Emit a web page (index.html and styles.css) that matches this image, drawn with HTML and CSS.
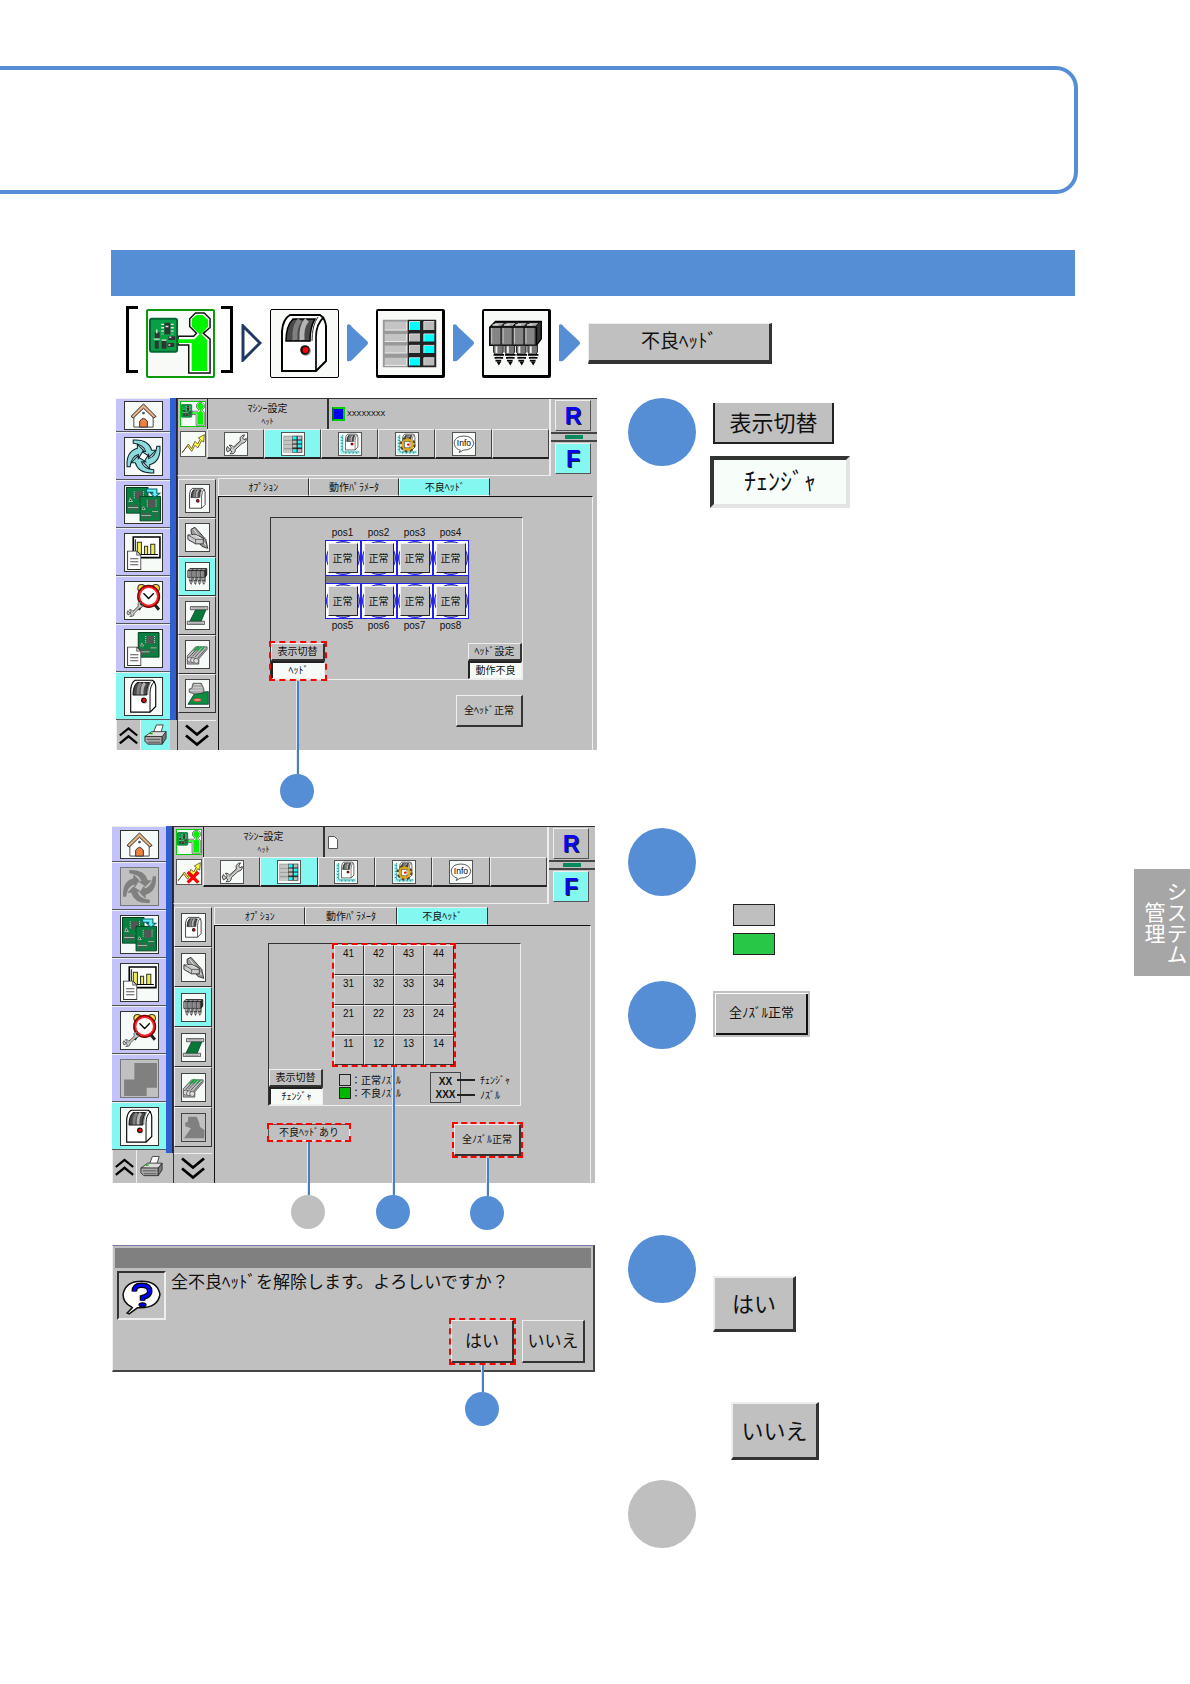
FILE: index.html
```html
<!DOCTYPE html>
<html lang="ja">
<head>
  <meta charset="UTF-8">
  <title>不良ヘッド</title>
  <link rel="stylesheet" href="styles.css">
</head>
<body>
  <!-- Icon set -->
  <svg class="sprite" aria-hidden="true">
    <symbol id="operator" viewBox="2 2 65 65">
      <path d="M32 27h16l3-3-7-7V9l6-6h9l6 6v9l-7 6 7 6v35H43V36H32z" fill="#fff" stroke="#111" stroke-width="1.500"/>
      <path d="M32 30h17l5-5-8-8V9l5-4h6l6 5v7l-7 8 6 6v32H46V34H32z" fill="#00f400"/>
      <rect x="3" y="9" width="28" height="34" rx="2" fill="#08a044" stroke="#063" stroke-width="2"/>
      <path d="M18 13h6v12h-6zM8 32h4v8H8zM15 32h5v8h-5zM8 23h5v6H8zM22 27h7v4h-7zM21 34h7v4h-7z" fill="#333"/>
      <path d="M16 14v11M26 14v11" stroke="#ddd" stroke-width="3" stroke-dasharray="1.500 2"/>
      <path d="M10 20v4M19 17h3M7 30h6M15 31h5M23 28h2M22 36h2" stroke="#ddd" stroke-width="1.500"/>
    </symbol>
    <symbol id="machine" viewBox="2 2 65 65">
      <path d="M12 62V22Q13 10 20 6H50Q55 9 56 17V52L46 62Z" fill="#fff" stroke="#000" stroke-width="2"/>
      <path d="M16 32Q16 17 23 10H45Q40 18 40 32Z" fill="#4a4a4a" stroke="#000" stroke-width="1.500"/>
      <path d="M25 31q-1-14 5-20" stroke="#808080" stroke-width="5" fill="none"/><path d="M32 31q-1-14 5-20" stroke="#b4b4b4" stroke-width="5" fill="none"/>
      <path d="M46 62V28Q46 15 54 8" stroke="#000" stroke-width="1.700" fill="none"/><path d="M42 32Q42 16 48 8" stroke="#333" fill="none"/>
      <circle cx="36" cy="42" r="5" fill="#aaa"/><circle cx="35" cy="41" r="4.800" fill="#111"/><circle cx="35.500" cy="41" r="3" fill="#f00"/>
    </symbol>
    <symbol id="table" viewBox="2 2 65 65">
      <path d="M6 10h26v50H6z" fill="#999"/><path d="M32 10h30v50H32z" fill="#222"/>
      <path d="M8 12h23v9H8zM8 25h23v8H8zM8 37h23v8H8zM8 50h23v8H8z" fill="#c4c4c4"/>
      <path d="M8 21h23V12M8 33h23v-8M8 45h23v-8M8 58h23v-8" stroke="#eee" fill="none"/>
      <path d="M49 12h11v9H49zM34 25h11v8H34zM34 37h11v8H34zM49 50h11v8H49z" fill="#bbb"/>
      <path d="M34 12h11v9H34zM49 25h11v8H49zM49 37h11v8H49zM34 50h11v8H34z" fill="#0ff"/>
      <path d="M34 21v-9h11M49 21v-9h11M34 33v-8h11M49 33v-8h11M34 45v-8h11M49 45v-8h11M34 58v-8h11M49 58v-8h11" stroke="#ddd" fill="none"/>
    </symbol>
    <symbol id="heads" viewBox="2 2 65 65">
      <path d="M7 18l6-6h48v18l-5 7H7z" fill="#333" stroke="#000" stroke-width="1.500"/>
      <g id="nozzle">
        <path d="M8 18h10v18H8z" fill="#858585"/><path d="M9 35V19" stroke="#ccc"/><path d="M8 17l5-4h10l-4 4z" fill="#aaa" stroke="#111"/><path d="M10 15.500h6" stroke="#eee"/>
        <path d="M11 37h10v7l-2 3h-6l-2-3z" fill="#777" stroke="#222"/><path d="M14 38v7" stroke="#eee" stroke-width="2"/>
        <path d="M11 47h11M12 50h9M13 53h6" stroke="#000" stroke-width="1.800"/><path d="M13 48.500h6M14 51.500h5" stroke="#ccc"/><path d="M14 54h5l-2.500 4z" fill="#000"/>
      </g>
      <use href="#nozzle" x="12"/><use href="#nozzle" x="24"/><use href="#nozzle" x="36"/>
      <path d="M7 18h49v19" fill="none" stroke="#000" stroke-width="1.200"/>
    </symbol>
    <symbol id="home" viewBox="0 0 36 28">
      <path d="M8 14v12h20V14L18 5z" fill="#fff" stroke="#444"/>
      <path d="M5 15L18 2l13 13-2.500 1.500L18 6.500 7.500 16.500z" fill="#e7b78c" stroke="#222"/>
      <path d="M14 26v-6q4-6 8 0v6z" fill="#f08040" stroke="#333"/><circle cx="18" cy="11.500" r="1.500" fill="#555"/>
    </symbol>
    <symbol id="cycle" viewBox="0 0 36 36">
      <g id="cyc"><path d="M8 2Q23 1 26 12h4l-6 6-8-5h4Q18 6 8 5z"/></g>
      <use href="#cyc" transform="rotate(90 18 18)"/><use href="#cyc" transform="rotate(180 18 18)"/><use href="#cyc" transform="rotate(270 18 18)"/>
    </symbol>
    <symbol id="board" viewBox="0 0 22 26">
      <path d="M.5.5h21v25H.5z" fill="#078040" stroke="#033d1c"/>
      <path d="M9 4h7v8H9zM3 17h3v6H3zM8 17h3v6H8zM14 15h4v2h-4zM14 19h4v2h-4z" fill="#555"/>
      <path d="M8 4v8M17 4v8" stroke="#ccc" stroke-dasharray="1 1"/><path d="M2 20h10M13 16h6M4 11l2 3H3z" stroke="#a5b8aa" fill="#111"/>
    </symbol>
    <symbol id="boards" viewBox="0 0 36 36">
      <use href="#board" x="1" y="1" width="22" height="26"/><use href="#board" x="14" y="9" width="21" height="26"/>
      <path d="M21 3h10v4h3l-5 4-4-4h2V6h-6z" fill="#6ee" stroke="#067"/>
    </symbol>
    <symbol id="report" viewBox="0 0 36 36">
      <path d="M8 3h26v20H8z" fill="#fff" stroke="#000" stroke-width="1.500"/>
      <path d="M12 8h4v12h-4zM19 12h3v8h-3zM25 10h4v10h-4z" fill="#ee4" stroke="#333"/><path d="M10 5v15h22" stroke="#000" fill="none"/>
      <use href="#page" x="2" y="16" width="14" height="19"/>
    </symbol>
    <symbol id="page" viewBox="0 0 14 19">
      <path d="M.5.5h9l4 4v14H.5z" fill="#fff" stroke="#333"/><path d="M9.500.500v4h4M3 8h8M3 11h8M3 14h8" stroke="#555" fill="none"/>
    </symbol>
    <symbol id="wrench" viewBox="0 0 36 36">
      <path d="M4 31q-4-5 0-9l2 3 3 2 1-3-3-4q5-1 7 3L25 13q-2-6 3-9l4-1-3 5 2 3 4-2q0 7-7 8L17 27q0 7-6 7l-3 0 3-3-2-3z" fill="#ccc" stroke="#222" stroke-width="1.300"/>
      <path d="M13 26L27 13" stroke="#777"/>
    </symbol>
    <symbol id="clock" viewBox="0 0 36 36">
      <circle cx="16" cy="6" r="3.500" fill="#fd3" stroke="#333"/><circle cx="30" cy="6" r="3.500" fill="#fd3" stroke="#333"/>
      <path d="M16 22l-3 5M29 22l4 5" stroke="#222" stroke-width="3"/>
      <circle cx="23" cy="14" r="10" fill="#fff" stroke="#700" stroke-width="2.500"/><circle cx="23" cy="14" r="9" fill="none" stroke="#f22" stroke-width="1.800"/>
      <path d="M18 11l5 5 5-5" stroke="#000" fill="none" stroke-width="1.300"/><use href="#wrench" x="1" y="17" width="17" height="18"/>
    </symbol>
    <symbol id="docboard" viewBox="0 0 36 36">
      <use href="#board" x="11" y="2" width="24" height="25"/><use href="#page" x="2" y="16" width="14" height="19"/>
    </symbol>
    <symbol id="printer" viewBox="0 0 26 26">
      <path d="M10 12l4-10h7l-3 10z" fill="#fff" stroke="#444"/><path d="M2 14l7-5h15l-4 6z" fill="#ddd" stroke="#444"/>
      <path d="M2 14h18v8H5l-3-3z" fill="#aaa" stroke="#333"/><path d="M20 14l4-5v7l-4 6z" fill="#777" stroke="#333"/>
      <path d="M4 17h14M5 20h13" stroke="#555"/><path d="M7 11h3" stroke="#0a0" stroke-width="1.500"/>
    </symbol>
    <symbol id="chevrons" viewBox="0 0 24 24">
      <path d="M1 2l11 9L23 2M1 12l11 9 11-9" stroke="#000" stroke-width="2.800" fill="none"/>
    </symbol>
    <symbol id="zigzag" viewBox="0 0 36 36">
      <path d="M2 31L11 18l5 7 5-11 4 4 4-7-3-2 9-5-1 11-3-2-6 11-4-4-5 9-6-8-8 9z" fill="#ff4" stroke="#542" stroke-width="1.200"/>
    </symbol>
    <symbol id="cross" viewBox="0 0 36 36"><path d="M16 18l16 16M32 18L16 34" stroke="#f00" stroke-width="5"/></symbol>
    <symbol id="axis" viewBox="0 0 36 36">
      <path d="M2 4h5v25h27v5H2z" fill="#a6f4f4"/><path d="M6 3v28h28M3 7h3M3 12h3M3 17h3M3 22h3M3 27h3M11 31v3M17 31v3M23 31v3M29 31v3" stroke="#066" fill="none" stroke-dasharray="3 1"/>
      <use href="#machine" x="6" y="-1" width="30" height="32"/>
    </symbol>
    <symbol id="gear" viewBox="0 0 36 36">
      <use href="#axis" width="36" height="36"/>
      <circle cx="19" cy="19" r="10" fill="none" stroke="#542" stroke-width="6" stroke-dasharray="4 3.850"/>
      <circle cx="19" cy="19" r="8" fill="#fff" stroke="#da1" stroke-width="4"/><path d="M14 14h9v10h-9z" fill="#fff" stroke="#333"/><circle cx="20" cy="19" r="2" fill="#f00"/>
    </symbol>
    <symbol id="info" viewBox="0 0 36 36">
      <path d="M9 27Q2 24 2 15 4 5 18 5t16 12Q32 28 17 28l-7 4 2-4z" fill="#fff" stroke="#333" stroke-width="1.300"/>
      <text x="18" y="22" text-anchor="middle" class="info-text">Info</text>
    </symbol>
    <symbol id="camera" viewBox="0 0 36 40">
      <path d="M8 7l6-3 17 19 3 14-9-3L8 13z" fill="#999" stroke="#222" stroke-width="1.300"/><path d="M12 7l19 25" stroke="#eee" stroke-width="1.500"/>
      <path d="M3 16h14l10 5v9H15L3 23z" fill="#ccc" stroke="#222" stroke-width="1.300"/><path d="M3 16l12 7v7M15 23h12" stroke="#333" fill="none"/><path d="M7 17h9l7 4" stroke="#fff" fill="none"/>
    </symbol>
    <symbol id="roll" viewBox="0 0 36 40">
      <path d="M16 9h16l-9 22H5z" fill="#087838" stroke="#022"/>
      <path d="M7 6h27v5H7zM2 29h27v5H2z" fill="#ccc" stroke="#222"/><path d="M10 8h21M5 32h21" stroke="#777"/>
    </symbol>
    <symbol id="feeder" viewBox="0 0 36 36">
      <path d="M2 20L15 6h18v4L20 25v8H2z" fill="#bbb" stroke="#222"/>
      <path d="M6 21L19 7M10 21L23 7M14 22L27 8M18 24L31 9" stroke="#222"/><path d="M12 12l8-7M17 12l7-6M23 12l6-6" stroke="#0a3" stroke-width="2"/>
      <circle cx="6" cy="26" r="4" fill="#ddd" stroke="#333"/><circle cx="11" cy="27" r="4" fill="#ddd" stroke="#333"/><circle cx="16" cy="28" r="4" fill="#ddd" stroke="#333"/>
    </symbol>
    <symbol id="part" viewBox="0 0 36 40">
      <path d="M14 19l21-2v20H3z" fill="#079040" stroke="#022"/>
      <path d="M11 4h13l4 9v6l-14 2-9-3v-5l4-1z" fill="#aaa" stroke="#222"/><path d="M11 11h14M6 15h19M13 6h9" stroke="#eee"/>
      <ellipse cx="18" cy="30" rx="6" ry="2.500" fill="#f87" stroke="#a32"/>
    </symbol>
    <symbol id="boards-off" viewBox="0 0 36 36"><path d="M13 3h22v24H25v8H3V19h10z" fill="#808080"/></symbol>
    <symbol id="part-off" viewBox="0 0 36 40"><path d="M10 3h13l4 10 1 6 7 5v13H3l11-16-9-3v-6l4-1z" fill="#808080"/></symbol>
    <symbol id="question" viewBox="0 0 40 40">
      <path d="M10 31Q2 27 2 19 4 6 20 6t18 13Q36 32 19 32H16l-8 6-2-1 5-5z" fill="#fff" stroke="#111" stroke-width="1.500"/>
      <path d="M13 16q0-6 7-6 8 0 8 6 0 4-7 6v3" fill="none" stroke="#000" stroke-width="5.500"/><path d="M13 16q0-6 7-6 8 0 8 6 0 4-7 6v3" fill="none" stroke="#00f" stroke-width="3"/>
      <ellipse cx="21" cy="29" rx="3.500" ry="2" fill="#00d" stroke="#000"/>
    </symbol>
  </svg>

  <header class="page-head"></header>
  <div class="title-bar"></div>

  <nav class="path" aria-label="操作手順">
    <span class="bracket"></span>
    <button class="tile tile-green" aria-label="オペレータ"><svg><use href="#operator"/></svg></button>
    <span class="bracket bracket-end"></span>
    <svg class="arrow" viewBox="0 0 21 38"><path d="M2 2v34l17-17z" fill="#fff" stroke="#1f3864" stroke-width="3"/></svg>
    <button class="tile tile-flat" aria-label="マシン"><svg><use href="#machine"/></svg></button>
    <svg class="arrow" viewBox="0 0 21 38"><path d="M0 1q3-2 5 2l15 14q2 2 0 4L5 36q-2 2-5 1z" fill="#558ed5"/></svg>
    <button class="tile" aria-label="設定"><svg><use href="#table"/></svg></button>
    <svg class="arrow" viewBox="0 0 21 38"><path d="M0 1q3-2 5 2l15 14q2 2 0 4L5 36q-2 2-5 1z" fill="#558ed5"/></svg>
    <button class="tile" aria-label="ヘッド"><svg><use href="#heads"/></svg></button>
    <svg class="arrow" viewBox="0 0 21 38"><path d="M0 1q3-2 5 2l15 14q2 2 0 4L5 36q-2 2-5 1z" fill="#558ed5"/></svg>
    <button class="btn path-btn">不良ﾍｯﾄﾞ</button>
  </nav>

  <main class="layout">
    <div class="shots">

      <!-- Head view -->
      <section class="screen screen-first">
        <div class="rail">
          <button class="rail-item rail-home" aria-label="ホーム"><svg><use href="#home"/></svg></button>
          <button class="rail-item" aria-label="運転"><svg class="cycle"><use href="#cycle"/></svg></button>
          <button class="rail-item" aria-label="基板切替"><svg><use href="#boards"/></svg></button>
          <button class="rail-item" aria-label="生産情報"><svg><use href="#report"/></svg></button>
          <button class="rail-item" aria-label="メンテナンス"><svg><use href="#clock"/></svg></button>
          <button class="rail-item" aria-label="データ"><svg><use href="#docboard"/></svg></button>
          <button class="rail-item on" aria-label="マシン"><svg><use href="#machine"/></svg></button>
          <div class="rail-foot">
            <button aria-label="上へ"><svg class="flip"><use href="#chevrons"/></svg></button>
            <button class="on" aria-label="印刷"><svg><use href="#printer"/></svg></button>
          </div>
        </div>
        <div class="edge"></div>
        <div class="work">
          <div class="top">
            <div class="top-main">
              <div class="title-row">
                <span class="cell-ico green"><svg><use href="#operator"/></svg></span>
                <div class="title">ﾏｼﾝｰ設定<small>ﾍｯﾄ</small></div>
                <div class="file"><i class="lot"></i>XXXXXXXX</div>
              </div>
              <div class="menu-row">
                <button class="cell-ico" aria-label="状態"><svg><use href="#zigzag"/></svg></button>
                <button class="menu" aria-label="調整"><svg><use href="#wrench"/></svg></button>
                <button class="menu on" aria-label="設定"><svg><use href="#table"/></svg></button>
                <button class="menu" aria-label="軸"><svg><use href="#axis"/></svg></button>
                <button class="menu" aria-label="動作"><svg><use href="#gear"/></svg></button>
                <button class="menu" aria-label="情報"><svg><use href="#info"/></svg></button>
                <span class="menu"></span>
              </div>
              <div class="strip"></div>
            </div>
            <div class="sides">
              <button class="side-btn">R</button>
              <div class="lane"><i></i></div>
              <button class="side-btn on">F</button>
            </div>
          </div>
          <div class="body">
            <div class="tools">
              <button class="tool" aria-label="本体"><svg><use href="#machine"/></svg></button>
              <button class="tool" aria-label="カメラ"><svg><use href="#camera"/></svg></button>
              <button class="tool on" aria-label="ヘッド"><svg><use href="#heads"/></svg></button>
              <button class="tool" aria-label="搬送"><svg><use href="#roll"/></svg></button>
              <button class="tool" aria-label="フィーダ"><svg><use href="#feeder"/></svg></button>
              <button class="tool" aria-label="部品"><svg><use href="#part"/></svg></button>
              <button class="tool-down" aria-label="下へ"><svg><use href="#chevrons"/></svg></button>
            </div>
            <div class="pane">
              <div class="tabs">
                <button>ｵﾌﾟｼｮﾝ</button>
                <button>動作ﾊﾟﾗﾒｰﾀ</button>
                <button class="on">不良ﾍｯﾄﾞ</button>
              </div>
              <div class="pane-body">
                <div class="panel">
                  <div class="heads">
                    <span>pos1</span><span>pos2</span><span>pos3</span><span>pos4</span>
                    <div class="head"><button>正常</button></div>
                    <div class="head"><button>正常</button></div>
                    <div class="head"><button>正常</button></div>
                    <div class="head"><button>正常</button></div>
                    <div class="beam"></div>
                    <div class="head"><button>正常</button></div>
                    <div class="head"><button>正常</button></div>
                    <div class="head"><button>正常</button></div>
                    <div class="head"><button>正常</button></div>
                    <span>pos5</span><span>pos6</span><span>pos7</span><span>pos8</span>
                  </div>
                  <div class="panel-foot">
                    <div class="pair mark">
                      <button class="btn">表示切替</button>
                      <output>ﾍｯﾄﾞ</output>
                      <span class="callout callout-view"></span>
                    </div>
                    <div class="pair">
                      <button class="btn">ﾍｯﾄﾞ設定</button>
                      <output>動作不良</output>
                    </div>
                  </div>
                </div>
                <div class="actions">
                  <button class="btn all-ok">全ﾍｯﾄﾞ正常</button>
                </div>
              </div>
            </div>
          </div>
        </div>
      </section>

      <!-- Changer view -->
      <section class="screen screen-second">
        <div class="rail">
          <button class="rail-item rail-home" aria-label="ホーム"><svg><use href="#home"/></svg></button>
          <button class="rail-item" aria-label="運転" disabled><svg class="cycle"><use href="#cycle"/></svg></button>
          <button class="rail-item" aria-label="基板切替"><svg><use href="#boards"/></svg></button>
          <button class="rail-item" aria-label="生産情報"><svg><use href="#report"/></svg></button>
          <button class="rail-item" aria-label="メンテナンス"><svg><use href="#clock"/></svg></button>
          <button class="rail-item" aria-label="データ" disabled><svg><use href="#boards-off"/></svg></button>
          <button class="rail-item on" aria-label="マシン"><svg><use href="#machine"/></svg></button>
          <div class="rail-foot">
            <button aria-label="上へ"><svg class="flip"><use href="#chevrons"/></svg></button>
            <button aria-label="印刷"><svg><use href="#printer"/></svg></button>
          </div>
        </div>
        <div class="edge"></div>
        <div class="work">
          <div class="top">
            <div class="top-main">
              <div class="title-row">
                <span class="cell-ico green"><svg><use href="#operator"/></svg></span>
                <div class="title">ﾏｼﾝｰ設定<small>ﾍｯﾄ</small></div>
                <div class="file"><svg class="doc" viewBox="0 0 10 13"><path d="M.5.5h6l3 3v9h-9z" fill="#fff" stroke="#555"/></svg></div>
              </div>
              <div class="menu-row">
                <button class="cell-ico" aria-label="状態"><svg viewBox="0 0 36 36"><use href="#zigzag"/><use href="#cross"/></svg></button>
                <button class="menu" aria-label="調整"><svg><use href="#wrench"/></svg></button>
                <button class="menu on" aria-label="設定"><svg><use href="#table"/></svg></button>
                <button class="menu" aria-label="軸"><svg><use href="#axis"/></svg></button>
                <button class="menu" aria-label="動作"><svg><use href="#gear"/></svg></button>
                <button class="menu" aria-label="情報"><svg><use href="#info"/></svg></button>
                <span class="menu"></span>
              </div>
              <div class="strip"></div>
            </div>
            <div class="sides">
              <button class="side-btn">R</button>
              <div class="lane"><i></i></div>
              <button class="side-btn on">F</button>
            </div>
          </div>
          <div class="body">
            <div class="tools">
              <button class="tool" aria-label="本体"><svg><use href="#machine"/></svg></button>
              <button class="tool" aria-label="カメラ"><svg><use href="#camera"/></svg></button>
              <button class="tool on" aria-label="ヘッド"><svg><use href="#heads"/></svg></button>
              <button class="tool" aria-label="搬送"><svg><use href="#roll"/></svg></button>
              <button class="tool" aria-label="フィーダ"><svg><use href="#feeder"/></svg></button>
              <button class="tool" aria-label="部品" disabled><svg><use href="#part-off"/></svg></button>
              <button class="tool-down" aria-label="下へ"><svg><use href="#chevrons"/></svg></button>
            </div>
            <div class="pane">
              <div class="tabs">
                <button>ｵﾌﾟｼｮﾝ</button>
                <button>動作ﾊﾟﾗﾒｰﾀ</button>
                <button class="on">不良ﾍｯﾄﾞ</button>
              </div>
              <div class="pane-body">
                <div class="panel">
                  <div class="nozzles mark">
                    <button>41</button><button>42</button><button>43</button><button>44</button>
                    <button>31</button><button>32</button><button>33</button><button>34</button>
                    <button>21</button><button>22</button><button>23</button><button>24</button>
                    <button>11</button><button>12</button><button>13</button><button>14</button>
                    <span class="callout callout-nozzle"></span>
                  </div>
                  <div class="panel-foot">
                    <div class="pair">
                      <button class="btn">表示切替</button>
                      <output>ﾁｪﾝｼﾞｬ</output>
                    </div>
                    <ul class="legend">
                      <li><i></i>：正常ﾉｽﾞﾙ</li>
                      <li><i class="bad"></i>：不良ﾉｽﾞﾙ</li>
                    </ul>
                    <div class="key">
                      <div class="key-box"><b>XX</b><b>XXX</b></div>
                      <div class="key-names"><span>ﾁｪﾝｼﾞｬ</span><span>ﾉｽﾞﾙ</span></div>
                    </div>
                  </div>
                </div>
                <div class="actions">
                  <div class="status mark">不良ﾍｯﾄﾞあり<span class="callout callout-status"></span></div>
                  <div class="mark">
                    <button class="btn all-ok">全ﾉｽﾞﾙ正常</button>
                    <span class="callout callout-reset"></span>
                  </div>
                </div>
              </div>
            </div>
          </div>
        </div>
      </section>

      <!-- Confirmation -->
      <section class="dialog">
        <div class="dialog-title"></div>
        <div class="dialog-body">
          <span class="dialog-ico"><svg><use href="#question"/></svg></span>
          <p>全不良ﾍｯﾄﾞを解除します。よろしいですか？</p>
        </div>
        <div class="dialog-buttons">
          <div class="mark">
            <button class="btn">はい</button>
            <span class="callout callout-yes"></span>
          </div>
          <button class="btn">いいえ</button>
        </div>
      </section>
    </div>

    <div class="steps">
      <div class="step step-view">
        <span class="dot"></span>
        <div class="step-body">
          <button class="btn view-btn">表示切替</button>
          <output class="view-value">ﾁｪﾝｼﾞｬ</output>
        </div>
      </div>
      <div class="step step-nozzle">
        <span class="dot"></span>
        <div class="step-body">
          <span class="swatch"></span>
          <span class="swatch swatch-bad"></span>
        </div>
      </div>
      <div class="step step-reset">
        <span class="dot"></span>
        <div class="step-body">
          <button class="btn reset-btn">全ﾉｽﾞﾙ正常</button>
        </div>
      </div>
      <div class="step step-answer">
        <span class="dot"></span>
        <div class="step-body">
          <button class="btn yes-btn">はい</button>
          <button class="btn no-btn">いいえ</button>
        </div>
      </div>
      <div class="step">
        <span class="dot dot-grey"></span>
      </div>
    </div>

    <aside class="chapter">システム<br>管理</aside>
  </main>
</body>
</html>
```
FILE: styles.css
```css
* {
  box-sizing: border-box;
}
body {
  margin: 0;
  background: #fff;
  color: #111;
  font-family: "Noto Sans CJK JP", "Liberation Sans", sans-serif;
  font-size: 10px;
  line-height: 14px;
}
button {
  margin: 0;
  padding: 0;
  border: 0;
  background: #c0c0c0;
  color: #111;
  font: inherit;
  cursor: pointer;
}
svg {
  display: block;
  width: 100%;
  height: 100%;
}
.sprite {
  display: none;
}
.info-text {
  font-family: "Liberation Sans", sans-serif;
  font-size: 14px;
}

/* Page top */
.page-head {
  height: 128px;
  margin: 66px 112px 56px 0;
  border: 4px solid #558ed5;
  border-left: 0;
  border-radius: 0 22px 22px 0;
}
.title-bar {
  height: 46px;
  margin: 0 115px 0 111px;
  background: #558ed5;
}
.path {
  display: flex;
  align-items: center;
  gap: 8px;
  height: 102px;
  padding: 0 0 8px 126px;
}
.bracket {
  width: 12px;
  height: 67px;
  margin-bottom: 8px;
  border: 3px solid #000;
  border-right: 0;
}
.bracket-end {
  margin-left: -2px;
  border-right: 3px solid #000;
  border-left: 0;
}
.tile {
  width: 69px;
  height: 69px;
  padding: 1px;
  border: 2px solid #000;
  border-right-width: 3px;
  border-bottom-width: 3px;
  border-radius: 2px;
  background: #f7faf7;
}
.tile-flat {
  border-width: 1px;
}
.tile-green {
  border: 2px solid #0a9a0a;
}
.arrow {
  width: 21px;
  height: 38px;
}
.btn {
  border: 1px solid #eee;
  border-right: 2px solid #333;
  border-bottom: 2px solid #333;
}
.path-btn {
  width: 184px;
  height: 41px;
  padding-bottom: 3px;
  border-right-width: 3px;
  border-bottom-width: 4px;
  font-size: 19px;
}

.layout {
  display: grid;
  grid-template-columns: 483fr 473fr 56px;
  gap: 33px;
  margin-left: 112px;
}

/* Machine screens */
.screen {
  display: flex;
  background: #c0c0c0;
}
.screen-first {
  margin: 0 -2px 76px 4px;
}
.screen-second {
  margin-bottom: 62px;
}
.screen .on {
  background: #84f7f0;
}
.rail {
  display: flex;
  flex-direction: column;
  width: 54px;
}
.rail-item {
  display: flex;
  align-items: center;
  justify-content: center;
  height: 48px;
  border-top: 1px solid #eee;
  border-bottom: 1px solid #555;
  background: #c3c3fa;
}
.rail-item svg {
  width: 39px;
  height: 39px;
  border: 1px solid #333;
  background: #f7fbf7;
}
.rail-home {
  height: 34px;
}
.rail-home svg {
  height: 29px;
}
.cycle {
  fill: #8ddcdc;
  stroke: #123;
}
.rail-item:disabled svg {
  border-color: #777;
  background: #c0c0c0;
  fill: #808080;
  stroke: none;
}
.rail-foot {
  display: flex;
  height: 30px;
}
.rail-foot button {
  flex: 1;
  padding: 3px 2px 2px;
  border-left: 1px solid #eee;
}
.rail-foot button:first-child {
  flex: 0 0 24px;
}
.rail-foot .flip {
  transform: rotate(180deg);
}
.screen-second .rail-home {
  height: 36px;
}
.screen-second .rail-foot {
  height: 33px;
}
.edge {
  width: 7px;
  margin-bottom: 30px;
  border-right: 1px solid #223;
  background: #3060d0;
}
.work {
  flex: 1;
  min-width: 0;
  display: flex;
  flex-direction: column;
}
.top {
  display: flex;
  height: 78px;
  border-top: 1px solid #333;
}
.top-main {
  flex: 1;
  display: flex;
  flex-direction: column;
}
.title-row,
.menu-row {
  display: flex;
  height: 30px;
}
.cell-ico {
  width: 30px;
  padding: 2px;
  border-left: 1px solid #333;
}
.cell-ico svg {
  width: 26px;
  height: 26px;
  border: 1px solid #555;
  background: #f7fbf7;
}
.green svg {
  border-color: #0c0;
}
.title {
  width: 120px;
  padding-top: 1px;
  border-left: 1px solid #222;
  line-height: 15px;
  text-align: center;
}
.title small {
  display: block;
  font-size: 8px;
  line-height: 12px;
}
.file {
  flex: 1;
  display: flex;
  align-items: center;
  gap: 2px;
  padding-left: 3px;
  border-left: 2px solid #333;
  font-family: "Liberation Mono", monospace;
  font-size: 8px;
}
.lot {
  width: 13px;
  height: 14px;
  border: 2px solid #0c0;
  border-left-color: #063;
  background: #00e;
}
.doc {
  width: 10px;
  height: 13px;
}
.menu {
  flex: 1;
  display: flex;
  align-items: center;
  justify-content: center;
  border-top: 1px solid #eee;
  border-left: 1px solid #eee;
  border-right: 1px solid #444;
  border-bottom: 2px solid #222;
}
.menu svg {
  width: 24px;
  height: 24px;
  border: 1px solid #555;
  background: #f7fbf7;
}
.strip {
  flex: 1;
  border-bottom: 1px solid #eee;
  border-left: 1px solid #333;
}
.sides {
  width: 48px;
  padding: 1px 6px 0 4px;
  border-left: 2px solid #eee;
}
.side-btn {
  display: block;
  width: 100%;
  height: 31px;
  border: 1px solid #eee;
  border-right-color: #555;
  border-bottom-color: #555;
  color: #0808e8;
  font: bold 23px/28px "Liberation Sans", sans-serif;
  text-shadow: 1px 1px 0 #223;
}
.lane {
  height: 10px;
  margin: 1px -6px 1px -4px;
  padding: 1px 14px;
  border-top: 2px solid #444;
  border-bottom: 2px solid #444;
}
.lane i {
  display: block;
  height: 4px;
  background: #078a5c;
}
.body {
  flex: 1;
  display: flex;
}
.tools {
  display: flex;
  flex-direction: column;
  width: 39px;
  margin-right: 2px;
  padding-top: 3px;
  border-left: 1px solid #333;
}
.tool {
  display: flex;
  align-items: center;
  justify-content: center;
  height: 39px;
  border: 1px solid #333;
  border-top-color: #eee;
  border-left-color: #eee;
}
.tool svg {
  width: 25px;
  height: 29px;
  border: 1px solid #444;
  background: #f7fbf7;
}
.tool:disabled svg {
  background: #c0c0c0;
}
.screen-second .tool {
  height: 40px;
}
.tool-down {
  height: 30px;
  margin-top: auto;
  padding: 2px 7px;
  border-top: 1px solid #eee;
}
.pane {
  flex: 1;
  display: flex;
  flex-direction: column;
  padding-top: 2px;
}
.screen-second .pane {
  padding-top: 3px;
}
.tabs {
  display: flex;
  padding-right: 107px;
}
.tabs button {
  flex: 1;
  height: 18px;
  border: 1px solid #eee;
  border-right-color: #333;
  line-height: 14px;
}
.pane-body {
  flex: 1;
  margin-right: 4px;
  padding: 20px 69px 0 51px;
  border-top: 1px solid #111;
  border-left: 1px solid #111;
  border-right: 1px solid #eee;
}
.screen-second .pane-body {
  padding: 17px 69px 0 53px;
}
.panel {
  display: flex;
  flex-direction: column;
  height: 163px;
  border: 1px solid #eee;
  border-top-color: #333;
  border-left-color: #333;
}
.heads {
  display: grid;
  grid-template-columns: repeat(4, 36px);
  justify-content: center;
  padding-top: 8px;
  text-align: center;
}
.heads span {
  font-family: "Liberation Sans", sans-serif;
}
.head {
  position: relative;
  height: 36px;
  padding: 2px;
  border: 1px solid #22e;
  background: #fff;
}
.head::before {
  content: "";
  position: absolute;
  inset: 0;
  border: 1px solid #22e;
  border-radius: 50%;
  background: #999;
}
.head button {
  position: relative;
  width: 30px;
  height: 30px;
  border: 1px solid #eee;
  border-right-color: #222;
  border-bottom-color: #222;
}
.beam {
  grid-column: 1 / -1;
  height: 7px;
  border-right: 1px solid #22e;
  border-left: 1px solid #22e;
  background: #808080;
}
.panel-foot {
  display: flex;
  justify-content: space-between;
  margin-top: auto;
}
.pair {
  width: 54px;
}
.pair .btn {
  display: block;
  width: 100%;
  height: 18px;
  padding-bottom: 2px;
  line-height: 13px;
}
.pair output {
  display: block;
  height: 18px;
  border: 1px solid #eee;
  border-top: 2px solid #222;
  border-left: 2px solid #222;
  background: #f7fbf7;
  line-height: 14px;
  text-align: center;
}
.actions {
  display: flex;
  justify-content: space-between;
  margin-top: 15px;
}
.screen-first .actions {
  justify-content: flex-end;
}
.all-ok {
  display: block;
  width: 67px;
  height: 32px;
  padding-bottom: 2px;
}
.screen-second .actions {
  margin-top: 18px;
}
.nozzles {
  display: grid;
  grid-template-columns: repeat(4, 30px);
  align-self: center;
  margin: 1px 2px 0 0;
}
.nozzles button {
  height: 30px;
  padding-bottom: 12px;
  border: 1px solid #eee;
  border-right-color: #333;
  border-bottom-color: #333;
  font-family: "Liberation Sans", sans-serif;
}
.legend {
  margin: 0 0 0 16px;
  padding: 4px 0 0;
  list-style: none;
}
.legend li {
  display: flex;
  align-items: center;
  height: 13px;
  white-space: nowrap;
}
.legend i {
  width: 12px;
  height: 12px;
  border: 1px solid #222;
}
.legend .bad {
  background: #00b800;
}
.key {
  display: flex;
  margin: 3px 7px 0 auto;
}
.key-box {
  width: 31px;
  height: 31px;
  padding-top: 2px;
  border: 1px solid #444;
  font: bold 10px/13px "Liberation Sans", sans-serif;
  text-align: center;
}
.key-box b {
  display: block;
}
.key-names {
  width: 52px;
}
.key-names span {
  display: flex;
  align-items: center;
  height: 15px;
  white-space: nowrap;
}
.key-names span::before {
  content: "";
  width: 18px;
  height: 2px;
  margin: 0 5px 0 -4px;
  background: #222;
}
.status {
  width: 82px;
  height: 17px;
  border: 1px solid #eee;
  border-top-color: #555;
  border-left-color: #555;
  text-align: center;
}

/* Dashed frames and their callouts */
.mark {
  position: relative;
}
.mark::after {
  content: "";
  position: absolute;
  inset: -2px;
  border: 2px dashed #f00;
  pointer-events: none;
}
.callout {
  position: absolute;
  z-index: 1;
  top: calc(100% + 2px);
  left: calc(50% - 2px);
  width: 3px;
  background: #4a80c0;
  border-left: 1px solid #dde8f4;
}
.callout::after {
  content: "";
  position: absolute;
  top: 100%;
  left: -17px;
  width: 34px;
  height: 34px;
  border-radius: 50%;
  background: #558ed5;
}
.callout-view {
  height: 93px;
}
.callout-nozzle {
  height: 128px;
}
.callout-status {
  height: 53px;
}
.callout-status::after {
  background: #bfbfbf;
}
.callout-reset {
  height: 38px;
}
.callout-yes {
  height: 27px;
}

/* Confirmation dialog */
.dialog {
  height: 127px;
  padding: 2px;
  border: 1px solid #eee;
  border-top-color: #77a;
  border-right: 2px solid #444;
  border-bottom: 2px solid #444;
  background: #c0c0c0;
}
.dialog-title {
  height: 20px;
  background: #808080;
}
.dialog-body {
  display: flex;
  gap: 5px;
  padding: 3px 2px 0;
}
.dialog-body p {
  margin: 0;
  font-size: 17px;
  line-height: 20px;
}
.dialog-ico {
  width: 49px;
  height: 49px;
  padding: 2px;
  border: 2px solid #333;
  border-right-color: #eee;
  border-bottom-color: #eee;
}
.dialog-buttons {
  display: flex;
  justify-content: flex-end;
  gap: 8px;
  padding-right: 6px;
}
.dialog-buttons .btn {
  display: block;
  width: 63px;
  height: 43px;
  padding-bottom: 2px;
  font-size: 17px;
}

/* Steps on the right */
.step {
  display: flex;
  gap: 17px;
}
.step-view {
  min-height: 430px;
}
.step-nozzle {
  min-height: 153px;
}
.step-reset {
  min-height: 254px;
}
.step-answer {
  min-height: 245px;
}
.dot {
  flex: none;
  width: 68px;
  height: 68px;
  border-radius: 50%;
  background: #558ed5;
}
.dot-grey {
  background: #bfbfbf;
}
.step-body .btn {
  display: block;
  padding-bottom: 4px;
  font-size: 22px;
}
.step .view-btn {
  width: 121px;
  height: 41px;
  margin: 5px 0 12px;
  border: 2px solid #222;
  border-top: 0;
  line-height: 34px;
}
.view-value {
  display: block;
  width: 140px;
  height: 52px;
  margin-left: -3px;
  border: 4px solid #e4e4e4;
  border-top-color: #333;
  border-left-color: #333;
  background: #f7fdf9;
  font-size: 24px;
  line-height: 40px;
  text-align: center;
}
.step-nozzle .step-body {
  padding: 76px 0 0 20px;
}
.swatch {
  display: block;
  width: 42px;
  height: 22px;
  margin-bottom: 7px;
  border: 1px solid #222;
  background: #bfbfbf;
}
.swatch-bad {
  background: #28c747;
}
.step .reset-btn {
  width: 97px;
  height: 46px;
  margin-top: 10px;
  border: 2px solid #c0c0c0;
  box-shadow: inset 1px 1px #fff, inset -2px -2px #111;
  font-size: 13px;
}
.step .yes-btn,
.step .no-btn {
  border-width: 2px 3px 3px 2px;
}
.yes-btn {
  width: 83px;
  height: 56px;
  margin: 41px 0 70px;
}
.no-btn {
  width: 88px;
  height: 58px;
  margin-left: 18px;
}

/* Chapter tab on the page edge */
.chapter {
  height: 107px;
  margin-top: 471px;
  padding-right: 2px;
  background: #a6a6a6;
  color: #fff;
  font-size: 21px;
  line-height: 22px;
  text-align: center;
  writing-mode: vertical-rl;
}
```
